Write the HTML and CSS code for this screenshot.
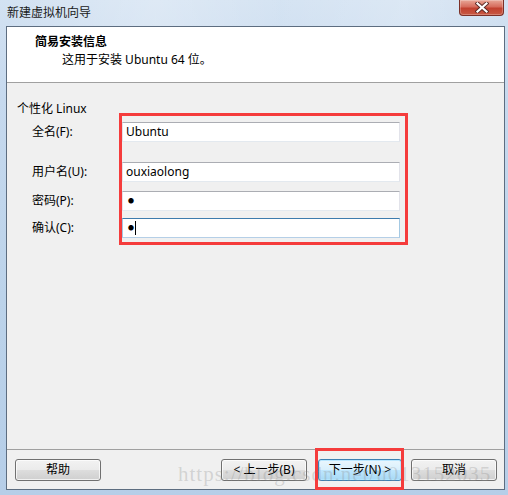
FILE: index.html
```html
<!DOCTYPE html>
<html lang="zh-CN">
<head>
<meta charset="utf-8">
<title>新建虚拟机向导</title>
<link rel="stylesheet" href="styles.css">
</head>
<body>
<div class="window">
  <div class="titlebar">
    <span class="title">新建虚拟机向导</span>
    <div class="close">
      <svg width="14" height="11" viewBox="0 0 14 11">
        <path d="M2.5 1.5 L11.5 9.5 M11.5 1.5 L2.5 9.5" stroke="#5a2a26" stroke-width="4" stroke-linecap="square"/>
        <path d="M2.5 1.5 L11.5 9.5 M11.5 1.5 L2.5 9.5" stroke="#ffffff" stroke-width="2.2" stroke-linecap="square"/>
      </svg>
    </div>
  </div>
  <div class="client">
    <div class="header">
      <div class="h-title">简易安装信息</div>
      <div class="h-sub">这用于安装 Ubuntu 64 位。</div>
    </div>
    <div class="body">
      <div class="group-label">个性化 Linux</div>
      <div class="form">
        <label class="lbl">全名(F):</label>
        <div class="field">Ubuntu</div>
        <label class="lbl row-user">用户名(U):</label>
        <div class="field row-user">ouxiaolong</div>
        <label class="lbl row-pw">密码(P):</label>
        <div class="field row-pw"><span class="dot">●</span></div>
        <label class="lbl row-cf">确认(C):</label>
        <div class="field focus row-cf"><span class="dot">●</span><span class="caret"></span></div>
      </div>
    </div>
    <div class="footer">
      <button class="btn btn-help">帮助</button>
      <div class="spacer"></div>
      <button class="btn btn-back">&lt; 上一步(B)</button>
      <button class="btn btn-next default">下一步(N) &gt;</button>
      <button class="btn btn-cancel">取消</button>
    </div>
  </div>
  <div class="watermark">https://blog.csdn.net/u013152035</div>
  <div class="mark mark-form"></div>
  <div class="mark mark-next"></div>
</div>
</body>
</html>
```

FILE: styles.css
```css
html, body {
  margin: 0;
  padding: 0;
  background: #ffffff;
}

.window {
  position: relative;
  width: 508px;
  height: 495px;
  box-sizing: border-box;
  padding: 0 3px 0 6px;
  display: flex;
  flex-direction: column;
  overflow: hidden;
  background: linear-gradient(180deg, #d3e2f2 0%, #c6d9ee 20%, #bcd3ea 60%, #b6cee8 100%);
  font-family: "Noto Sans", "Noto Sans CJK SC", sans-serif;
  font-size: 12px;
  line-height: 16px;
  color: #000;
}

.titlebar {
  height: 26px;
  display: flex;
  align-items: flex-start;
  justify-content: space-between;
  background: linear-gradient(90deg, rgba(255,255,255,0.0) 0%, rgba(255,255,255,0.25) 30%, rgba(255,255,255,0.05) 55%, rgba(255,255,255,0.2) 80%, rgba(255,255,255,0) 100%);
}

.title {
  margin-top: 5px;
  margin-left: 1px;
  color: #1a1a1a;
}

.close {
  width: 45px;
  height: 16px;
  margin-right: 1px;
  box-sizing: border-box;
  border: 1px solid #7c3027;
  border-top: none;
  border-radius: 0 0 4px 4px;
  background: linear-gradient(180deg, #e8a797 0%, #d66c5c 45%, #c1412f 55%, #c85a44 100%);
  display: flex;
  align-items: center;
  justify-content: center;
  box-shadow: inset 0 0 0 1px rgba(255,255,255,0.25);
}

.close svg {
  display: block;
}

.client {
  width: 499px;
  height: 464px;
  box-sizing: border-box;
  border: 1px solid #5d6d80;
  background: #f0f0f0;
  display: flex;
  flex-direction: column;
}

.header {
  height: 56px;
  box-sizing: border-box;
  background: #ffffff;
  border-bottom: 1px solid #a0a0a0;
  padding: 7px 0 0 28px;
  flex: none;
}

.h-title {
  font-weight: bold;
}

.h-sub {
  margin-top: 2px;
  padding-left: 27px;
}

.body {
  flex: 1;
  padding: 18px 0 0 10px;
}

.group-label {
  height: 16px;
}

.form {
  margin-top: 5px;
  margin-left: 15px;
  display: grid;
  grid-template-columns: 90px 278px;
  align-items: center;
}

.lbl {
  height: 20px;
  line-height: 20px;
}

.field {
  height: 20px;
  box-sizing: border-box;
  background: #ffffff;
  border: 1px solid #e2e3ea;
  border-top-color: #abadb3;
  border-bottom-color: #e3e9ef;
  padding: 0 0 0 3px;
  line-height: 18px;
  display: flex;
  align-items: center;
}

.field.focus {
  border-color: #a4c9e3;
  border-top-color: #3d7bad;
  border-bottom-color: #b5cfe7;
}

.row-user {
  margin-top: 20px;
}

.row-pw {
  margin-top: 9px;
}

.row-cf {
  margin-top: 7px;
}

.dot {
  font-size: 6px;
  line-height: 18px;
  margin-left: 2px;
}

.caret {
  display: inline-block;
  width: 1px;
  height: 14px;
  background: #000;
  margin-left: 1px;
}

.footer {
  height: 40px;
  flex: none;
  border-top: 1px solid #a0a0a0;
  box-sizing: border-box;
  padding: 9px 7px 0 8px;
  display: flex;
  align-items: flex-start;
}

.spacer {
  flex: 1;
}

.btn {
  height: 22px;
  box-sizing: border-box;
  border: 1px solid #707070;
  border-radius: 3px;
  background: linear-gradient(180deg, #f2f2f2 0%, #ebebeb 48%, #dddddd 52%, #cfcfcf 100%);
  box-shadow: inset 0 0 0 1px rgba(255,255,255,0.7);
  font-family: "Noto Sans", "Noto Sans CJK SC", sans-serif;
  font-size: 12px;
  line-height: 18px;
  color: #000;
  padding: 0;
  text-align: center;
}

.btn-help {
  width: 86px;
}

.btn-back {
  width: 86px;
}

.btn-next {
  width: 84px;
  margin-left: 11px;
}

.btn-cancel {
  width: 86px;
  margin-left: 9px;
}

.btn.default {
  border-color: #3c7fb1;
  background: linear-gradient(180deg, #eaf6fd 0%, #d9f0fc 48%, #bee6fd 52%, #a7d9f5 100%);
  box-shadow: inset 0 0 0 1px rgba(180,230,255,0.9);
}

.watermark {
  position: absolute;
  left: 178px;
  top: 462px;
  font-family: "Liberation Serif", serif;
  font-size: 21px;
  line-height: 24px;
  letter-spacing: 1px;
  color: rgba(140, 140, 140, 0.3);
  white-space: nowrap;
  pointer-events: none;
}

.mark {
  position: absolute;
  border: 3px solid #f53c3c;
  box-sizing: border-box;
  pointer-events: none;
}

.mark-form {
  left: 119px;
  top: 113px;
  width: 289px;
  height: 132px;
}

.mark-next {
  left: 315px;
  top: 448px;
  width: 89px;
  height: 42px;
}
```
